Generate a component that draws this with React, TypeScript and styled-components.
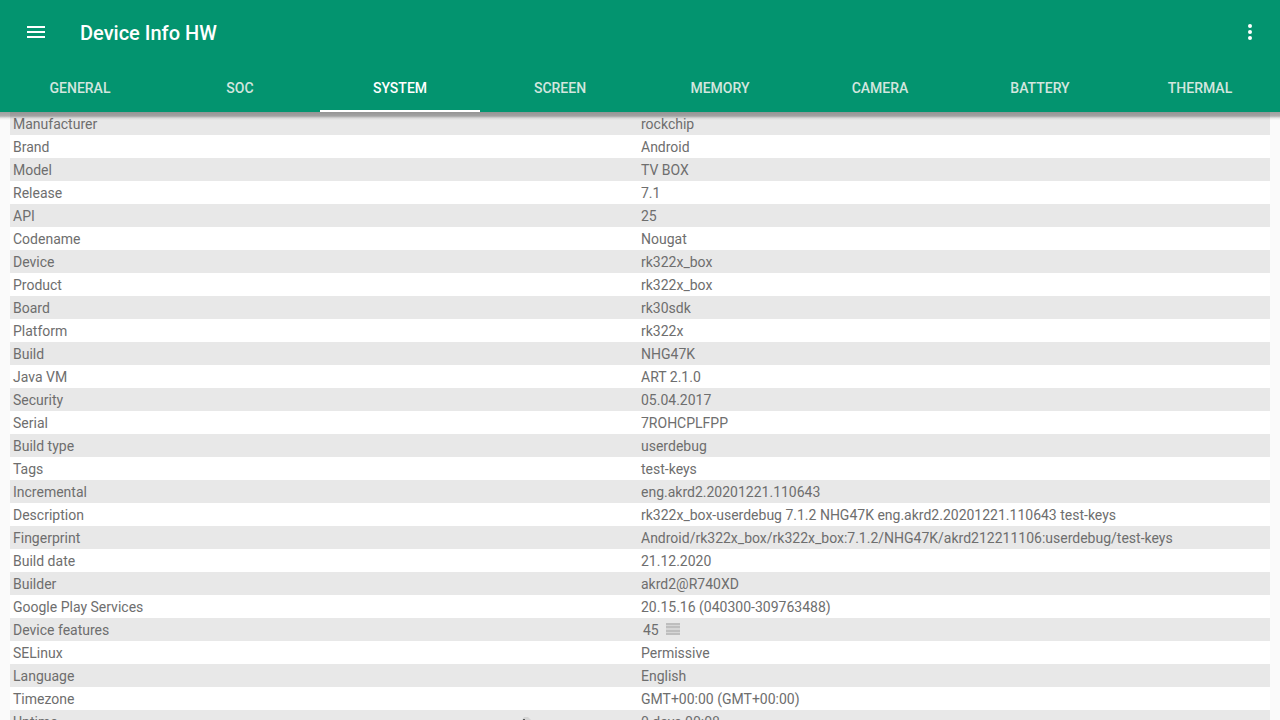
import React from "react";
import styled, { createGlobalStyle } from "styled-components";

const GlobalStyle = createGlobalStyle`
  * { box-sizing: border-box; }
  html { height: 100%; }
  body {
    height: 100%;
    margin: 0;
    background: #fafafa;
    font-family: Roboto, "Liberation Sans", sans-serif;
  }
  #root { height: 100%; }
`;

const Screen = styled.div`
  display: flex;
  flex-direction: column;
  height: 100%;
  overflow: hidden;
  position: relative;
`;

const AppBar = styled.header`
  flex: none;
  position: relative;
  z-index: 1;
  background: #03946f;
`;

const BarShadow = styled.div`
  position: absolute;
  top: 100%;
  left: 0;
  right: 0;
  height: 8px;
  background: linear-gradient(
    rgba(0, 0, 0, 0.36) 0px,
    rgba(0, 0, 0, 0.3) 4px,
    rgba(0, 0, 0, 0.08) 6px,
    rgba(0, 0, 0, 0) 8px
  );
  pointer-events: none;
`;

const Toolbar = styled.div`
  display: flex;
  align-items: center;
  height: 64px;
  padding: 0 18px 0 24px;
`;

const IconButton = styled.button`
  display: flex;
  padding: 0;
  border: 0;
  background: none;
  color: #fff;
  cursor: pointer;
`;

const Title = styled.h1`
  flex: 1;
  margin: 0;
  padding: 2px 0 0 32px;
  color: #fff;
  font-size: 20px;
  font-weight: 500;
  line-height: 24px;
`;

const TabList = styled.nav`
  display: flex;
  height: 48px;
`;

const Tab = styled.button<{ $active: boolean }>`
  flex: 1 1 0;
  min-width: 0;
  padding: 2px 0 0;
  border: 0;
  border-bottom: 2px solid ${(p) => (p.$active ? "#fff" : "transparent")};
  background: none;
  color: ${(p) => (p.$active ? "#fff" : "#d3e6df")};
  font-family: inherit;
  font-size: 14px;
  font-weight: 500;
  line-height: 20px;
  cursor: pointer;
`;

const Content = styled.main`
  flex: 1;
  min-height: 0;
  overflow: hidden;
  padding: 0 10px;
`;

const InfoTable = styled.table`
  width: 100%;
  table-layout: fixed;
  border-collapse: collapse;
  background: #fff;
  color: #6e6e6e;
  font-size: 14px;
  line-height: 16px;
`;

const Row = styled.tr`
  height: 23px;
  &:nth-child(odd) { background: #e8e8e8; }
`;

const Label = styled.th`
  width: 50%;
  padding: 0 3px;
  font-weight: 400;
  text-align: left;
`;

const Value = styled.td`
  padding: 0 0 0 1px;
  white-space: nowrap;
`;

const FeatureButton = styled.button`
  display: flex;
  align-items: center;
  gap: 7px;
  padding: 0 2px;
  border: 0;
  background: none;
  color: inherit;
  font: inherit;
  cursor: pointer;
`;

const Pointer = styled.svg`
  position: absolute;
  left: 520px;
  bottom: 0;
`;

const tabs = ["GENERAL", "SOC", "SYSTEM", "SCREEN", "MEMORY", "CAMERA", "BATTERY", "THERMAL"];

const rows: [string, string][] = [
  ["Manufacturer", "rockchip"],
  ["Brand", "Android"],
  ["Model", "TV BOX"],
  ["Release", "7.1"],
  ["API", "25"],
  ["Codename", "Nougat"],
  ["Device", "rk322x_box"],
  ["Product", "rk322x_box"],
  ["Board", "rk30sdk"],
  ["Platform", "rk322x"],
  ["Build", "NHG47K"],
  ["Java VM", "ART 2.1.0"],
  ["Security", "05.04.2017"],
  ["Serial", "7ROHCPLFPP"],
  ["Build type", "userdebug"],
  ["Tags", "test-keys"],
  ["Incremental", "eng.akrd2.20201221.110643"],
  ["Description", "rk322x_box-userdebug 7.1.2 NHG47K eng.akrd2.20201221.110643 test-keys"],
  ["Fingerprint", "Android/rk322x_box/rk322x_box:7.1.2/NHG47K/akrd212211106:userdebug/test-keys"],
  ["Build date", "21.12.2020"],
  ["Builder", "akrd2@R740XD"],
  ["Google Play Services", "20.15.16 (040300-309763488)"],
  ["Device features", "45"],
  ["SELinux", "Permissive"],
  ["Language", "English"],
  ["Timezone", "GMT+00:00 (GMT+00:00)"],
  ["Uptime", "0 days 00:08"],
];

export default function App() {
  return (
    <>
      <GlobalStyle />
      <Screen>
        <AppBar>
          <Toolbar>
            <IconButton aria-label="Open navigation">
              <svg width="24" height="24" viewBox="0 0 24 24" fill="currentColor">
                <path d="M3 6h18v2H3zM3 11h18v2H3zM3 16h18v2H3z" />
              </svg>
            </IconButton>
            <Title>Device Info HW</Title>
            <IconButton aria-label="More options">
              <svg width="24" height="24" viewBox="0 0 24 24" fill="currentColor">
                <circle cx="12" cy="6" r="2" />
                <circle cx="12" cy="12" r="2" />
                <circle cx="12" cy="18" r="2" />
              </svg>
            </IconButton>
          </Toolbar>
          <TabList>
            {tabs.map((name) => (
              <Tab key={name} $active={name === "SYSTEM"}>{name}</Tab>
            ))}
          </TabList>
          <BarShadow />
        </AppBar>
        <Content>
          <InfoTable>
            <tbody>
              {rows.map(([label, value]) => (
                <Row key={label}>
                  <Label scope="row">{label}</Label>
                  <Value>
                    {label === "Device features" ? (
                      <FeatureButton>
                        {value}
                        <svg width="14" height="14" viewBox="0 0 14 14" aria-hidden="true">
                          <path fill="#d6d6d6" d="M0 0h14v12H0z" />
                          <path fill="#bebebe" d="M0 0h14v2H0zM0 3h14v2H0zM0 7h14v2H0zM0 10h14v2H0z" />
                        </svg>
                      </FeatureButton>
                    ) : value}
                  </Value>
                </Row>
              ))}
            </tbody>
          </InfoTable>
        </Content>
        <Pointer width="12" height="3" viewBox="0 0 12 3" aria-hidden="true">
          <path d="M4 0h4l3 3H2z" fill="#d4d4d4" />
          <path d="M3 2h2v1H3z" fill="#555" />
        </Pointer>
      </Screen>
    </>
  );
}
